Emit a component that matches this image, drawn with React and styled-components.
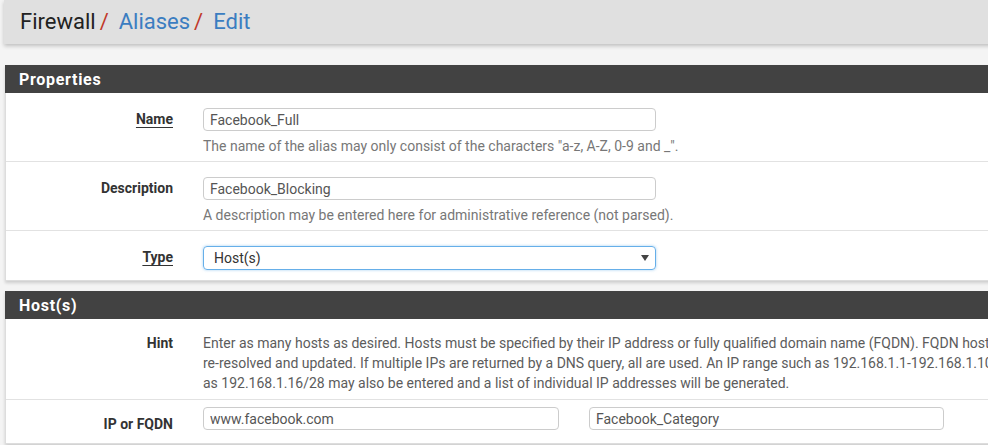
import React from "react";
import styled, { createGlobalStyle } from "styled-components";

const Global = createGlobalStyle`
  html, body { margin: 0; padding: 0; overflow: hidden; }
  body {
    background: #f4f4f4;
    font-family: Roboto, "Liberation Sans", Arial, sans-serif;
    font-size: 14px;
    color: #333;
  }
  * { box-sizing: border-box; }
`;

const Page = styled.div`
  width: 1200px;
  padding-bottom: 20px;
`;

const Crumbs = styled.div`
  margin-left: 4px;
  height: 44px;
  background: #e0e0e0;
  box-shadow: 0 2px 4px rgba(0, 0, 0, 0.22);
  display: flex;
  align-items: center;
  padding-left: 16px;
  font-size: 22px;
  line-height: 1;
  padding-bottom: 1px;
`;

const Crumb = styled.span`
  color: ${(p) => (p.$link ? "#3b7dc1" : "#222")};
`;

const Sep = styled.span`
  color: #c0392b;
  margin: 0 10px 0 4px;
`;

const Panel = styled.section`
  margin: ${(p) => p.$mt}px 0 0 5px;
  background: #fff;
  border: 1px solid #ddd;
  border-top: 0;
  box-shadow: 0 2px 3px rgba(0, 0, 0, 0.16);
`;

const PanelHead = styled.h2`
  margin: 0;
  height: 28px;
  background: #424242;
  color: #fff;
  font-size: 16px;
  font-weight: 700;
  letter-spacing: 0.7px;
  display: flex;
  align-items: center;
  padding-left: 14px;
  margin-left: -1px;
  margin-right: -1px;
`;

const Row = styled.div`
  display: grid;
  grid-template-columns: 182px 1fr;
  padding: ${(p) => p.$pad};
  & + & {
    border-top: 1px solid #e2e2e2;
  }
`;

const Label = styled.label`
  text-align: right;
  padding-right: 15px;
  padding-top: ${(p) => p.$pt || 0}px;
  font-weight: 700;
  color: #333;
  line-height: 20px;
  span {
    text-decoration: ${(p) => (p.$req ? "underline" : "none")};
    text-underline-offset: 3px;
  }
`;

const Field = styled.div`
  padding-left: 15px;
  display: flex;
  flex-direction: column;
`;

const Inputs = styled.div`
  padding-left: 15px;
  display: flex;
  gap: 30px;
`;

const Input = styled.input`
  width: ${(p) => p.$w}px;
  height: 23px;
  border: 1px solid #ccc;
  border-radius: 4px;
  padding: 0 6px;
  font-family: inherit;
  font-size: 14px;
  color: #555;
  background: #fff;
  outline: none;
`;

const SelectWrap = styled.div`
  position: relative;
  width: 453px;
  height: 24px;
  border: 1px solid #66afe9;
  border-radius: 4px;
  box-shadow: 0 0 3px rgba(102, 175, 233, 0.6);
  display: flex;
  align-items: center;
  padding-left: 10px;
  color: #333;
`;

const Arrow = styled.svg`
  position: absolute;
  right: 6px;
  top: 8px;
`;

const Help = styled.div`
  margin-top: 5px;
  color: #777;
  line-height: 20px;
`;

const Hint = styled.div`
  color: #5c5c5c;
  line-height: 20px;
  white-space: nowrap;
`;

export default function App() {
  return (
    <Page>
      <Global />
      <Crumbs>
        <Crumb>Firewall</Crumb>
        <Sep>/</Sep>
        <Crumb $link>Aliases</Crumb>
        <Sep>/</Sep>
        <Crumb $link>Edit</Crumb>
      </Crumbs>

      <Panel $mt={21}>
        <PanelHead>Properties</PanelHead>
        <Row $pad="15px 0 5px">
          <Label $req $pt={1}><span>Name</span></Label>
          <Field>
            <Input $w={453} readOnly defaultValue="Facebook_Full" />
            <Help>The name of the alias may only consist of the characters "a-z, A-Z, 0-9 and _".</Help>
          </Field>
        </Row>
        <Row $pad="15px 0 5px">
          <Label $pt={1}><span>Description</span></Label>
          <Field>
            <Input $w={453} readOnly defaultValue="Facebook_Blocking" />
            <Help>A description may be entered here for administrative reference (not parsed).</Help>
          </Field>
        </Row>
        <Row $pad="15px 0 10px">
          <Label $req $pt={1}><span>Type</span></Label>
          <Field>
            <SelectWrap>
              Host(s)
              <Arrow width="8" height="6" viewBox="0 0 8 6">
                <path d="M0 0h8L4 6z" fill="#444" />
              </Arrow>
            </SelectWrap>
          </Field>
        </Row>
      </Panel>

      <Panel $mt={10}>
        <PanelHead>Host(s)</PanelHead>
        <Row $pad="14px 0 6px">
          <Label><span>Hint</span></Label>
          <Field>
            <Hint>
              Enter as many hosts as desired. Hosts must be specified by their IP address or fully qualified domain name (FQDN). FQDN hostnames are periodically
              <br />
              re-resolved and updated. If multiple IPs are returned by a DNS query, all are used. An IP range such as 192.168.1.1-192.168.1.10 or a small subnet such
              <br />
              as 192.168.1.16/28 may also be entered and a list of individual IP addresses will be generated.
            </Hint>
          </Field>
        </Row>
        <Row $pad="7px 0 9px">
          <Label $pt={7}><span>IP or FQDN</span></Label>
          <Inputs>
            <Input $w={356} readOnly defaultValue="www.facebook.com" />
            <Input $w={355} readOnly defaultValue="Facebook_Category" />
          </Inputs>
        </Row>
      </Panel>
    </Page>
  );
}
